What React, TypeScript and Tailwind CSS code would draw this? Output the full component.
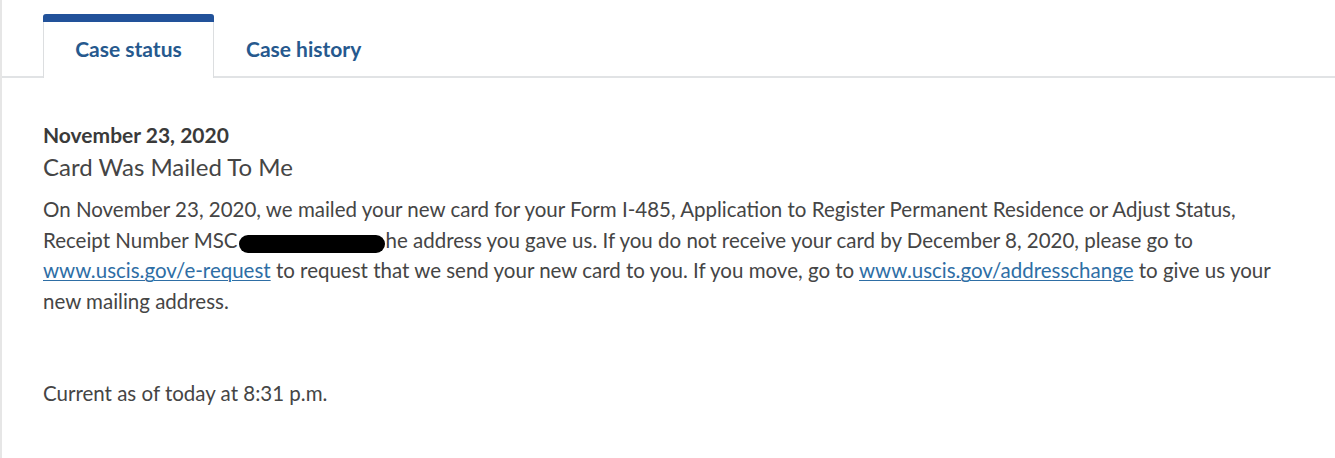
export default function App() {
  const link = "text-[#2e6ea5] underline decoration-1 underline-offset-2"
  return (
    <div className="min-h-[458px] bg-white border-l-2 border-[#e6e6e6] font-['Lato',sans-serif] text-[#454545]">
      <div className="flex items-end h-[78px] border-b-2 border-[#e1e3e5]">
        <div className="w-[41px]" />
        <div className="relative -mb-[2px] flex h-[64px] w-[171px] items-center justify-center rounded-t-[3px] border-x border-[#dcdee0] bg-white pt-[6px]">
          <div className="absolute -left-px -right-px top-0 h-[8px] rounded-t-[3px] bg-[#22529a]" />
          <span className="text-[21px] font-bold text-[#26598e]">Case status</span>
        </div>
        <div className="-mb-[2px] flex h-[64px] items-center px-[32px] pt-[6px]">
          <span className="text-[21px] font-bold text-[#26598e]">Case history</span>
        </div>
      </div>

      <div className="px-[41px] pt-[44px]">
        <div className="text-[21px] font-bold leading-[26px] text-[#3a3a3a]">November 23, 2020</div>
        <div className="mt-[4px] text-[24px] leading-[30px]">Card Was Mailed To Me</div>
        <p className="mt-[12px] whitespace-nowrap text-[20.5px] leading-[30.5px]">
          On November 23, 2020, we mailed your new card for your Form I-485, Application to Register Permanent Residence or Adjust Status,
          <br />
          Receipt Number MSC
          <span className="mx-[1px] inline-block h-[18px] w-[146px] translate-y-[2px] rounded-full bg-black align-middle" />
          he address you gave us. If you do not receive your card by December 8, 2020, please go to
          <br />
          <span className={link}>www.uscis.gov/e-request</span> to request that we send your new card to you. If you move, go to{" "}
          <span className={link}>www.uscis.gov/addresschange</span> to give us your
          <br />
          new mailing address.
        </p>
        <p className="mt-[62px] text-[20.5px] leading-[30px]">Current as of today at 8:31 p.m.</p>
      </div>
    </div>
  )
}
